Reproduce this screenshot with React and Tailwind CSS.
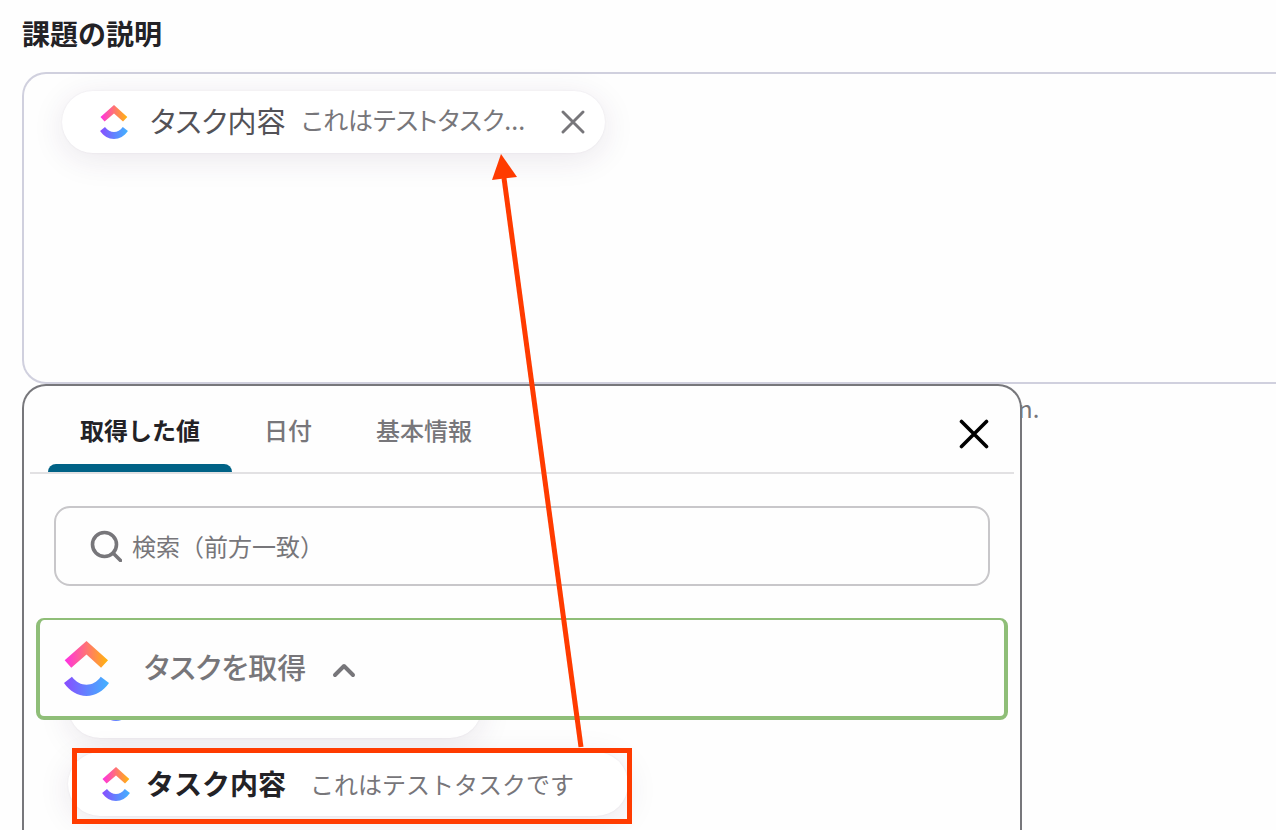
import React, { useId } from 'react';

const tabs = ['取得した値', '日付', '基本情報'];

function Logo({ className }) {
  const id = useId();

  return (
    <svg viewBox="0 0 136 166" className={className} aria-hidden="true">
      <defs>
        <linearGradient id={`${id}-top`} x1="0" y1="0" x2="1" y2="0">
          <stop offset="0" stopColor="#ff2fe6" />
          <stop offset="0.5" stopColor="#ff7375" />
          <stop offset="1" stopColor="#ffb60a" />
        </linearGradient>
        <linearGradient id={`${id}-bottom`} x1="0" y1="0" x2="1" y2="0">
          <stop offset="0" stopColor="#8a4bff" />
          <stop offset="0.5" stopColor="#6282ff" />
          <stop offset="1" stopColor="#42b3ff" />
        </linearGradient>
      </defs>
      <path d="M68 0 2 58l20 23 46-40 44 40 21-23Z" fill={`url(#${id}-top)`} />
      <path
        d="M0 127 24 108C37 125 52 132 68 132S99 125 111 108L136 127C118 152 95 166 68 166S18 152 0 127Z"
        fill={`url(#${id}-bottom)`}
      />
    </svg>
  );
}

function CloseIcon({ className }) {
  return (
    <svg viewBox="0 0 30 30" className={className} fill="none" stroke="currentColor" strokeWidth="3.6" strokeLinecap="round" aria-hidden="true">
      <path d="M2.5 2.5l25 25M27.5 2.5l-25 25" />
    </svg>
  );
}

export default function App() {
  return (
    <main className="relative h-screen overflow-hidden bg-[#fefefe] pl-[22px] pt-3.5 font-['Noto_Sans_CJK_JP',sans-serif] text-2xl text-[#77767a]">
      <h1 className="mb-5 text-[28px] leading-[38px] font-bold text-[#232226]">課題の説明</h1>

      <div className="relative">
        {/* Description field */}
        <div className="min-h-[312px] rounded-l-3xl border-y-2 border-l-2 border-[#d0d0de] pt-[17px] pl-[38px]">
          <div className="inline-flex h-[62px] items-center rounded-full bg-white pr-5 pl-[38px] shadow-[0_6px_32px_rgba(60,30,80,0.1),0_0_2px_rgba(60,40,80,0.08)] [font-feature-settings:'palt']">
            <Logo className="h-[34px] w-7" />
            <span className="ml-[22px] pb-1 text-[29px] text-[#535257]">タスク内容</span>
            <span className="ml-4 pb-1 text-[25px]">これはテストタスク...</span>
            <button type="button" aria-label="削除" className="ml-9">
              <CloseIcon className="size-6" />
            </button>
          </div>
        </div>

        <p className="mt-2 pl-[996px] leading-8">n.</p>

        {/* Value picker */}
        <section role="dialog" aria-label="取得した値" className="absolute top-[312px] left-0 w-[1000px] max-w-full rounded-t-3xl border-2 border-b-0 border-[#77777b] bg-[#fefefe]">
          <div className="mx-1.5 flex h-[88px] items-stretch border-b-2 border-[#e2e1e3] pl-[18px]">
            <div role="tablist" className="flex">
              {tabs.map((tab, index) => (
                <button
                  key={tab}
                  type="button"
                  role="tab"
                  aria-selected={index === 0}
                  className={`flex flex-col ${index === 0 ? 'font-bold text-[#232226]' : 'font-medium'}`}
                >
                  <span className="flex flex-1 items-center px-8 pt-2.5">{tab}</span>
                  <span className={`h-2 w-full rounded-t-lg ${index === 0 ? 'bg-[#006286]' : ''}`} />
                </button>
              ))}
            </div>
            <button type="button" aria-label="閉じる" className="mt-2.5 mr-[25px] ml-auto text-black">
              <CloseIcon className="size-[30px]" />
            </button>
          </div>

          <label className="mx-[30px] mt-8 flex h-20 items-center rounded-2xl border-2 border-[#c8c7ca] pl-[34px]">
            <svg viewBox="0 0 32 32" className="size-8" fill="none" stroke="currentColor" strokeWidth="3.6" aria-hidden="true">
              <circle cx="14.5" cy="14.5" r="12" />
              <path d="M23 23l7.5 7.5" strokeLinecap="round" />
            </svg>
            <input
              type="text"
              aria-label="検索"
              placeholder="検索（前方一致）"
              className="ml-2.5 min-w-0 flex-1 bg-transparent outline-none placeholder:text-[#77767a]"
            />
          </label>

          <button
            type="button"
            aria-expanded="true"
            className="relative z-10 mx-3 mt-8 flex h-[102px] w-[calc(100%-24px)] items-center rounded-lg border-4 border-t-2 border-[#8fbe78] bg-[#fefefe] pl-6 text-[29px] font-medium [font-feature-settings:'palt']"
          >
            <Logo className="h-[55px] w-[45px]" />
            <span className="ml-[35px] pb-1">タスクを取得</span>
            <svg viewBox="0 0 24 16" className="mt-1 ml-[26px] h-4 w-6" fill="none" stroke="currentColor" strokeWidth="4" aria-hidden="true">
              <path d="M3 13l9-9 9 9" strokeLinecap="round" strokeLinejoin="round" />
            </svg>
          </button>

          <div className="overflow-hidden pb-16 pl-11">
            <div className="-mt-[46px] flex h-16 w-[414px] items-center rounded-full bg-white pb-1 pl-[34px] shadow-[0_6px_32px_rgba(60,30,80,0.1),0_0_2px_rgba(60,40,80,0.08)]">
              <Logo className="h-[34px] w-7" />
            </div>
            <div className="relative mt-3.5 flex h-16 w-[560px] items-center rounded-full bg-white pl-[34px] shadow-[0_6px_32px_rgba(60,30,80,0.1),0_0_2px_rgba(60,40,80,0.08)]">
              <Logo className="h-[34px] w-7" />
              <span className="ml-4 text-[28px] font-bold text-[#232226]">タスク内容</span>
              <span className="ml-6">これはテストタスクです</span>
              <span className="absolute -top-1 -right-1 -bottom-2 left-1 border-[5px] border-[#ff3b00]" />
            </div>
          </div>
        </section>
      </div>

      {/* Arrow from the picked value to its chip */}
      <svg className="pointer-events-none absolute top-[150px] left-[480px] z-20 h-[600px] w-[120px]" viewBox="0 0 120 600" aria-hidden="true">
        <path d="M24 28L101 597" stroke="#ff3b00" strokeWidth="5" fill="none" />
        <path d="M21 4l16 23-25 3Z" fill="#ff3b00" />
      </svg>
    </main>
  );
}
